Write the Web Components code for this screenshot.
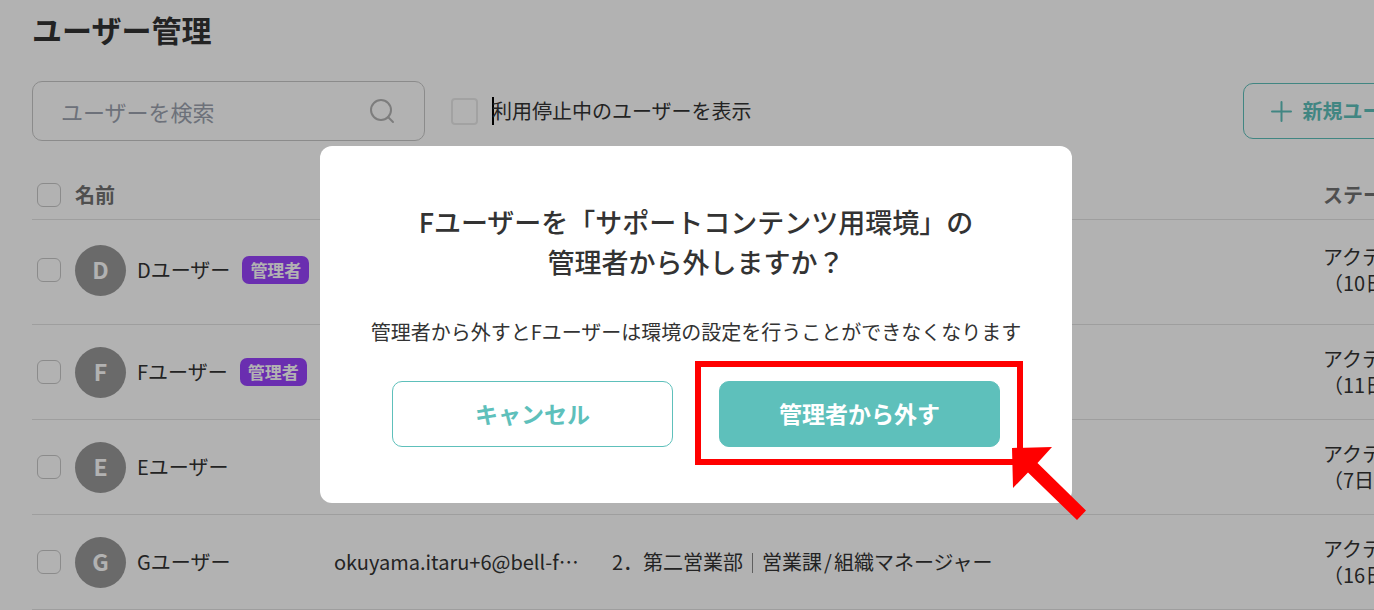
<!DOCTYPE html>
<html lang="ja">
<head>
<meta charset="utf-8">
<title>ユーザー管理</title>
<style>
  html, body { margin: 0; min-height: 100%; }
  body {
    font-family: "Noto Sans CJK JP", "Noto Sans", sans-serif;
    font-size: 20px;
    color: #333;
    background: #fff;
    --accent: #5ec0bb;
    --line: #e2e2e2;
    --control-line: #c8c8c8;
  }
</style>
</head>
<body>
<user-admin-page>
  <page-toolbar slot="toolbar"></page-toolbar>
  <user-table slot="content"></user-table>
  <confirm-dialog slot="dialog">
    <span slot="title">Fユーザーを「サポートコンテンツ用環境」の<br>管理者から外しますか？</span>
    <span slot="description">管理者から外すとFユーザーは環境の設定を行うことができなくなります</span>
    <ui-button slot="actions" kind="outline">キャンセル</ui-button>
    <callout-frame slot="actions"><ui-button kind="solid">管理者から外す</ui-button></callout-frame>
  </confirm-dialog>
</user-admin-page>

<script>
  const define = (name, html) => {
    const template = document.createElement('template');
    template.innerHTML = html;
    customElements.define(name, class extends HTMLElement {
      constructor() {
        super();
        this.attachShadow({ mode: 'open' }).append(template.content.cloneNode(true));
      }
    });
  };

  define('ui-button', `
    <style>
      :host { display: block; width: 281px; }
      button {
        box-sizing: border-box; width: 100%; height: 66px; margin: 0; padding: 0 0 2px;
        border: 1px solid var(--accent); border-radius: 10px;
        background: #fff; color: var(--accent);
        font: 700 23px/32px "Noto Sans CJK JP", sans-serif;
      }
      :host([kind="solid"]) button { background: var(--accent); color: #fff; }
    </style>
    <button type="button"><slot></slot></button>`);

  define('callout-frame', `
    <style>
      :host { display: block; position: relative; }
      .frame {
        position: absolute; inset: -20px -23px -18px -24px;
        border: 6px solid #f00; pointer-events: none;
      }
      svg { position: absolute; left: 100%; top: 100%; margin: 0 0 0 12px; overflow: visible; pointer-events: none; }
    </style>
    <slot></slot>
    <div class="frame"></div>
    <svg width="74" height="73" viewBox="0 0 74 73" aria-hidden="true">
      <path fill="#f00" d="M0 1L40 0L25.500 16L74 63.500L65 73L16 25.500L1 41Z"/>
    </svg>`);

  define('user-avatar', `
    <style>
      :host {
        display: flex; flex: none; align-items: center; justify-content: center; box-sizing: border-box;
        width: 51px; height: 51px; padding-bottom: 2px; border-radius: 50%;
        background: #999; color: #fff; font-size: 23px; font-weight: 700; line-height: 32px;
      }
    </style>
    <slot></slot>`);

  define('role-badge', `
    <style>
      :host {
        display: block; padding: 0 8px; border-radius: 7px; margin-left: 12px;
        background: #9843fd; color: #fff; font-size: 17px; font-weight: 700; line-height: 28px;
      }
    </style>
    <slot></slot>`);

  define('page-toolbar', `
    <style>
      :host { display: flex; align-items: center; height: 60px; }
      .search {
        box-sizing: border-box; display: flex; align-items: center; width: 393px; height: 60px;
        padding: 0 29px 0 28px; border: 1px solid var(--control-line); border-radius: 10px;
      }
      .search input {
        flex: 1; min-width: 0; border: 0; padding: 0; outline: 0; background: none;
        font: 22px/32px "Noto Sans CJK JP", sans-serif; color: #333;
      }
      .search input::placeholder { color: #9ca3af; opacity: 1; }
      .filter { display: flex; align-items: center; margin-left: 26px; line-height: 28px; }
      .filter input {
        appearance: none; box-sizing: border-box; width: 27px; height: 27px; margin: 0 14px 0 0;
        border: 2px solid #e9e9e9; border-radius: 4px;
      }
      .caret { width: 2px; height: 28px; margin-right: -2px; background: #000; }
      .add {
        box-sizing: border-box; display: flex; align-items: center; gap: 10px; height: 56px;
        margin: 0 0 0 auto; padding: 0 31px 0 27px; border: 1px solid var(--accent); border-radius: 10px;
        background: none; color: var(--accent); white-space: nowrap;
        font: 700 20px/28px "Noto Sans CJK JP", sans-serif;
      }
    </style>
    <label class="search">
      <input type="text" placeholder="ユーザーを検索" aria-label="ユーザーを検索">
      <svg width="26" height="26" viewBox="0 0 26 26" fill="none" stroke="#b4b4b4" stroke-width="2" stroke-linecap="round" aria-hidden="true">
        <circle cx="12" cy="12" r="10"/><path d="M19 19L24 24"/>
      </svg>
    </label>
    <label class="filter"><input type="checkbox"><span class="caret"></span>利用停止中のユーザーを表示</label>
    <button class="add" type="button">
      <svg width="21" height="21" viewBox="0 0 21 21" stroke="currentColor" stroke-width="2" stroke-linecap="round" aria-hidden="true">
        <path d="M10.500 1V20M1 10.500H20"/>
      </svg>新規ユーザー
    </button>`);

  const users = [
    { initial: 'D', admin: true, days: 10 },
    { initial: 'F', admin: true, days: 11 },
    { initial: 'E', days: 7 },
    { initial: 'G', days: 16, mail: 'okuyama.itaru+6@bell-f…',
      role: '2．第二営業部<i class="bar"></i>営業課<span class="slash">/</span>組織マネージャー' },
  ];

  define('user-table', `
    <style>
      :host { display: block; }
      table { width: 100%; table-layout: fixed; border-collapse: separate; border-spacing: 0; line-height: 26px; }
      .c-name { width: 302px; }
      .c-mail { width: 278px; }
      .c-status { width: 131px; }
      th, td { box-sizing: border-box; padding: 0; height: 95px; border-bottom: 1px solid var(--line); text-align: left; white-space: nowrap; font-weight: 400; }
      thead th { height: 48px; padding-bottom: 2px; color: #717171; font-weight: 700; }
      tbody tr:first-child > * { height: 105px; padding-bottom: 4px; }
      .name { display: flex; align-items: center; padding-left: 5px; }
      input {
        appearance: none; box-sizing: border-box; flex: none; width: 24px; height: 24px; margin: 0 14px 0 0;
        border: 1px solid var(--control-line); border-radius: 6px;
      }
      user-avatar { margin-right: 11px; }
      .bar { display: inline-block; width: 1px; height: 20px; margin: 0 9px; background: #888; vertical-align: -3px; }
      .slash { margin: 0 2px; }
    </style>
    <table>
      <colgroup><col class="c-name"><col class="c-mail"><col><col class="c-status"></colgroup>
      <thead><tr>
        <th scope="col"><div class="name"><input type="checkbox" aria-label="すべて選択">名前</div></th>
        <th></th><th></th><th scope="col">ステータス</th>
      </tr></thead>
      <tbody>${users.map(u => `<tr>
        <th scope="row"><div class="name">
          <input type="checkbox" aria-label="${u.initial}ユーザーを選択">
          <user-avatar>${u.initial}</user-avatar>${u.initial}ユーザー${u.admin ? '<role-badge>管理者</role-badge>' : ''}
        </div></th>
        <td>${u.mail || ''}</td><td>${u.role || ''}</td><td>アクティブ<br>（${u.days}日前）</td>
      </tr>`).join('')}</tbody>
    </table>`);

  define('confirm-dialog', `
    <style>
      :host { display: block; box-sizing: border-box; width: 752px; padding: 56px 0; border-radius: 12px; background: #fff; text-align: center; }
      h2 { margin: 0; font-size: 27px; font-weight: 500; line-height: 40px; }
      p { margin: 35px 0 34px; font-size: 20px; line-height: 30px; }
      .actions { display: flex; justify-content: center; gap: 46px; }
    </style>
    <h2 id="title"><slot name="title"></slot></h2>
    <p><slot name="description"></slot></p>
    <div class="actions"><slot name="actions"></slot></div>`);

  define('user-admin-page', `
    <style>
      :host { display: block; position: relative; min-height: 100vh; overflow: hidden; }
      main { padding: 9px 0 0 32px; margin-right: -80px; }
      h1 { margin: 0; font-size: 30px; font-weight: 700; line-height: 40px; }
      .toolbar { margin: 32px 0 31px; }
      .overlay {
        position: absolute; inset: 0 -18px 0 0; display: flex; justify-content: center; align-items: flex-start;
        padding-top: 146px; background: rgba(0, 0, 0, .3);
      }
    </style>
    <main>
      <h1>ユーザー管理</h1>
      <div class="toolbar"><slot name="toolbar"></slot></div>
      <slot name="content"></slot>
    </main>
    <div class="overlay" role="dialog" aria-modal="true"><slot name="dialog"></slot></div>`);
</script>
</body>
</html>
